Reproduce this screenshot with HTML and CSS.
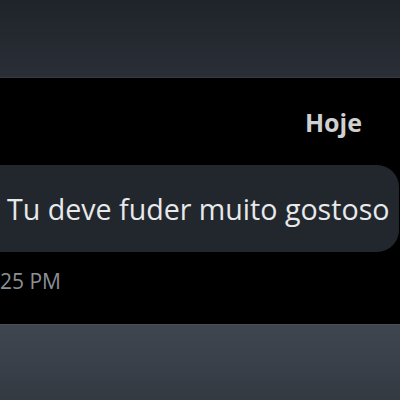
FILE: index.html
```html
<!DOCTYPE html>
<html lang="pt">
<head>
    <meta charset="UTF-8">
    <meta name="viewport" content="width=device-width, initial-scale=1.0">
    <title>Mensagem</title>
    <link rel="stylesheet" href="styles.css">
</head>
<body>
    <div class="top-bar"></div>
    <div class="chat">
        <div class="day">Hoje</div>
        <div class="bubble">Tu deve fuder muito gostoso</div>
        <div class="time">25 PM</div>
    </div>
    <div class="bottom-bar"></div>
</body>
</html>
```

FILE: styles.css
```css
* {
    margin: 0;
    padding: 0;
    box-sizing: border-box;
}

body {
    width: 400px;
    height: 400px;
    overflow: hidden;
    background: #000;
    font-family: "Open Sans", "Noto Sans", sans-serif;
    display: flex;
    flex-direction: column;
}

.top-bar {
    height: 78px;
    background: linear-gradient(#1f232a, #2a2f37);
    border-bottom: 1px solid #353b43;
}

.chat {
    height: 246px;
    background: #000;
    display: flex;
    flex-direction: column;
    overflow: hidden;
}

.day {
    align-self: flex-end;
    margin-right: 38px;
    margin-top: 27px;
    color: #cfd0d1;
    font-size: 25px;
    font-weight: 700;
    line-height: 34px;
}

.bubble {
    margin-top: 26px;
    margin-left: -30px;
    margin-right: 1px;
    height: 87px;
    padding-left: 37px;
    display: flex;
    align-items: center;
    background: #22272e;
    border-radius: 22px;
    color: #e7e9ea;
    font-size: 28.6px;
}

.time {
    margin-top: 16px;
    color: #8b9096;
    font-size: 21px;
    line-height: 26px;
}

.bottom-bar {
    height: 76px;
    background: linear-gradient(#3f4650, #343a42);
    border-top: 1px solid #4a5059;
}
```
